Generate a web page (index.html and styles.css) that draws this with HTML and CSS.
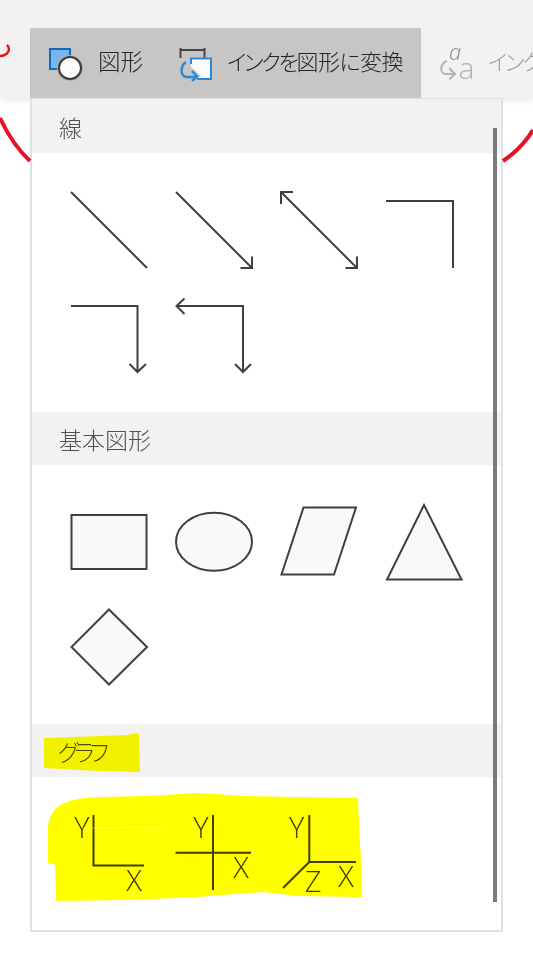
FILE: index.html
```html
<!DOCTYPE html>
<html lang="ja">
<head>
<meta charset="utf-8">
<title>図形</title>
<link rel="stylesheet" href="styles.css">
</head>
<body>
<div class="app">
  <header class="toolbar">
    <div class="selected">
      <div class="tool tool-shapes">
        <svg class="tool-icon" viewBox="0 0 40 40">
          <rect class="ti-blue" x="5" y="6" width="20" height="20"/>
          <circle class="ti-halo" cx="25" cy="25" r="13"/>
          <circle class="ti-circle" cx="25" cy="25" r="11"/>
        </svg>
        <span class="label">図形</span>
      </div>
      <div class="tool tool-convert">
        <svg class="tool-icon" viewBox="0 0 40 40">
          <path class="ti-dark" d="M3 7H28M3.500 5V15M27.500 5V15"/>
          <rect class="ti-fill" x="14" y="15" width="20" height="21"/>
          <path class="ti-notch" d="M14 24L24 33L17 38H14Z"/>
          <path class="ti-box" d="M14 21V15.500H34V36H20"/>
          <path class="ti-arrow" d="M9 19C3 23 3 34 10 34H19M15 28L20 33.500L15 38"/>
        </svg>
        <span class="label"><span class="kana">インクを</span>図形に変換</span>
      </div>
    </div>
    <div class="tool tool-disabled">
      <svg class="tool-icon" viewBox="0 0 40 40">
        <text class="ti-script" x="18" y="17">a</text>
        <text class="ti-a" x="29.500" y="36">a</text>
        <path class="ti-gray" d="M9.700 17.700C2 22 3 31 9 31H18M12.300 25.300L18 31L12.300 36.300"/>
      </svg>
      <span class="label"><span class="kana">インクを</span>テキストに変換</span>
    </div>
  </header>

  <main class="menu">
    <h2 class="head">線</h2>
    <div class="grid grid-lines">
      <svg class="cell" viewBox="0 0 105 105"><path d="M14 15L90 91"/></svg>
      <svg class="cell" viewBox="0 0 105 105"><path d="M14 15L90 91M78.500 91H90V79.500"/></svg>
      <svg class="cell" viewBox="0 0 105 105"><path d="M14 15L90 91M78.500 91H90V79.500M14 27V15H26"/></svg>
      <svg class="cell" viewBox="0 0 105 105"><path d="M14 24H81V91"/></svg>
      <svg class="cell" viewBox="0 0 105 105"><path d="M14 24H80.500V90M72.500 82L80.500 90L89 82"/></svg>
      <svg class="cell" viewBox="0 0 105 105"><path d="M14.500 24H81V90M22.500 16.500L14.500 24L22.500 32M73 82L81 90L89 82"/></svg>
    </div>

    <h2 class="head">基本図形</h2>
    <div class="grid grid-shapes">
      <svg class="cell shape" viewBox="0 0 105 105"><rect x="14.500" y="25" width="75" height="54"/></svg>
      <svg class="cell shape" viewBox="0 0 105 105"><ellipse cx="52" cy="51.700" rx="38" ry="29"/></svg>
      <svg class="cell shape" viewBox="0 0 105 105"><path d="M36.500 17.500H89L67 84.500H14.500Z"/></svg>
      <svg class="cell shape" viewBox="0 0 105 105"><path d="M52 15L15 89.500H89.500Z"/></svg>
      <svg class="cell shape" viewBox="0 0 105 105"><path d="M52 14.500L90 52L52 89.500L14.500 52Z"/></svg>
    </div>

    <h2 class="head head-kana">グラフ</h2>
    <div class="grid grid-charts">
      <svg class="cell" viewBox="0 0 105 105">
        <path d="M36.500 15V65.500H87"/>
        <text x="25" y="38">Y</text>
        <text x="77" y="91">X</text>
      </svg>
      <svg class="cell" viewBox="0 0 105 105">
        <path d="M51 15V90M13.500 52.700H89"/>
        <text x="39" y="38">Y</text>
        <text x="79" y="78">X</text>
      </svg>
      <svg class="cell" viewBox="0 0 105 105">
        <path d="M42.300 15V62H89M42.300 62L16 88"/>
        <text x="29.700" y="38">Y</text>
        <text x="46" y="92">Z</text>
        <text x="79" y="87">X</text>
      </svg>
    </div>
    <div class="scrollbar"></div>
  </main>

  <svg class="ink" viewBox="0 0 533 964">
    <path class="red" d="M0 118C8 135 18 150 30 161"/>
    <path class="red" d="M503 161C515 153 525 143 533 130"/>
    <path class="red thin" d="M0 56C5 56 9 53 9 49C9 47 8 46 7 45"/>
    <path class="marker" d="M44 738L73 737L127 735L139 733L140 772L97 771L44 768Z"/>
    <path class="marker" d="M48 863L48 827C49 815 55 808 62 804C72 799 85 798 97 797L147 796L197 793L247 796L297 797L358 798L359 828L361 860L362 897L297 896L263 892L197 897L130 900L56 901L55 865Z"/>
    <path class="sliver" d="M82 828L164 827"/>
  </svg>
</div>
</body>
</html>
```

FILE: styles.css
```css
* { box-sizing: border-box; }
html, body { margin: 0; padding: 0; background: #fff; }
body {
  font-family: "Noto Sans CJK JP", "Noto Sans", sans-serif;
  overflow: hidden;
}
.app {
  position: relative;
  width: 533px;
  height: 964px;
  overflow: hidden;
  background: #fff;
}

/* Toolbar */
.toolbar {
  display: flex;
  align-items: stretch;
  height: 98px;
  padding-top: 28px;
  padding-left: 30px;
  background: #f3f2f1;
  box-shadow: 0 1px 8px rgba(0, 0, 0, 0.12);
  white-space: nowrap;
}
.selected {
  display: flex;
  flex: none;
  width: 391px;
  padding-left: 15px;
  background: #c8c6c4;
}
.tool {
  display: flex;
  flex: none;
  align-items: center;
  color: #252423;
  font-size: 22px;
  font-feature-settings: "palt";
}
.label { padding-bottom: 6px; letter-spacing: -0.5px; font-weight: 300; }
.kana { letter-spacing: -2.4px; }
.tool-icon { flex: none; width: 40px; height: 40px; overflow: visible; }
.tool-shapes { gap: 13px; width: 132px; font-size: 22.500px; }
.tool-shapes .label { letter-spacing: 0; }
.tool-convert { gap: 10px; }
.tool-disabled { gap: 11px; margin-left: 16px; color: #a19f9d; }

.ti-blue { fill: #7ab6ee; stroke: #0f6cbd; stroke-width: 2; }
.ti-halo { fill: #b3b0ad; }
.ti-circle { fill: #fbfbfb; stroke: #3b3a39; stroke-width: 2; }
.ti-dark { fill: none; stroke: #484644; stroke-width: 2; }
.ti-fill { fill: #fbfbfb; }
.ti-notch { fill: #c8c6c4; }
.ti-box { fill: none; stroke: #2b88d8; stroke-width: 2; }
.ti-arrow { fill: none; stroke: #2b88d8; stroke-width: 2.500; }
.ti-gray { fill: none; stroke: #b3b0ad; stroke-width: 2; }
.ti-script {
  fill: #8a8886;
  font-family: "Open Sans", sans-serif;
  font-size: 22px;
  font-style: italic;
  font-weight: 300;
  text-anchor: middle;
}
.ti-a {
  fill: #b3b0ad;
  font-family: "Open Sans", sans-serif;
  font-size: 30px;
  font-weight: 300;
  text-anchor: middle;
}

/* Dropdown */
.menu {
  position: relative;
  width: 473px;
  height: 834px;
  margin-left: 30px;
  border: 2px solid #e1e1e1;
  background: #fff;
}
.head {
  display: flex;
  align-items: center;
  height: 53px;
  margin: 0;
  padding-left: 27px;
  background: #f2f2f2;
  color: #505050;
  font-size: 23px;
  font-weight: 300;
  font-feature-settings: "palt";
}
.menu > .head:first-child { height: 54px; margin-top: -1px; padding-top: 1px; }
.head-kana { letter-spacing: -4.500px; padding-left: 26px; }
.grid {
  display: grid;
  grid-template-columns: repeat(4, 105px);
  grid-auto-rows: 105px;
  padding-left: 25px;
}
.grid-lines { padding-top: 24px; padding-bottom: 25px; }
.grid-shapes { padding-top: 25px; padding-bottom: 24px; }
.grid-charts { padding-top: 23px; }
.cell { display: block; width: 105px; height: 105px; }
.cell path, .cell rect, .cell ellipse {
  fill: none;
  stroke: #404040;
  stroke-width: 2;
}
.cell.shape path, .cell.shape rect, .cell.shape ellipse { fill: #f9f9f9; }
.cell text {
  fill: #404040;
  font-family: "Open Sans", sans-serif;
  font-size: 29px;
  font-weight: 300;
  text-anchor: middle;
}
.scrollbar {
  position: absolute;
  top: 28px;
  right: 4px;
  width: 4px;
  height: 774px;
  background: #7a7a7a;
}

/* Ink drawn over the page */
.ink {
  position: absolute;
  top: 0;
  left: 0;
  width: 533px;
  height: 964px;
  pointer-events: none;
}
.red { fill: none; stroke: #e81224; stroke-width: 4; }
.red.thin { stroke-width: 2.500; }
.marker { fill: #ffff00; mix-blend-mode: multiply; }
.sliver { fill: none; stroke: #fff; stroke-width: 0.600; opacity: 0.7; mix-blend-mode: normal; }
```
